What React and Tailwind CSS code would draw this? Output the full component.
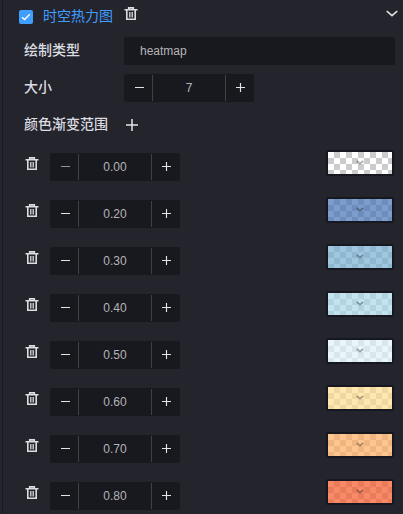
import { useState } from "react";

const initialStops = [
    { value: 0, light: "#ffffff", dark: "#cccccc" },
    { value: 0.2, light: "#7d9dcd", dark: "#6d8dbd" },
    { value: 0.3, light: "#9fc7df", dark: "#8fb7cf" },
    { value: 0.4, light: "#c3e4ef", dark: "#b3d4df" },
    { value: 0.5, light: "#e8f5fb", dark: "#d9e6eb" },
    { value: 0.6, light: "#ffe8b0", dark: "#efd8a0" },
    { value: 0.7, light: "#ffc58e", dark: "#efb580" },
    { value: 0.8, light: "#f88a67", dark: "#e97c5b" },
];

const TrashIcon = () => (
    <svg width="14" height="14" viewBox="0 0 14 14" fill="none" stroke="#dcdde0" strokeWidth="1.6">
        <path d="M0.5 2.7h13M4.7 2.5V0.9h4.6v1.6M2.8 3v9.3h8.4V3" />
        <path d="M5.8 5v5.5M8.2 5v5.5" strokeWidth="1.3" />
    </svg>
);

const PlusIcon = ({ size }) => (
    <svg width={size} height={size} viewBox="0 0 12 12" stroke="#e5e5e5" strokeWidth="1.5">
        <path d="M0 6h12M6 0v12" />
    </svg>
);

const Stepper = ({ value, step = 1, digits = 0, onChange }) => (
    <div className="flex h-7 w-[130px] items-stretch rounded-[2px] bg-[#18181f] py-px">
        <button
            type="button"
            onClick={() => onChange(Math.max(0, value - step))}
            className="flex w-[29px] items-center justify-center border-r border-[#414141] pb-px pl-[3px]"
        >
            <svg width="9" height="9" viewBox="0 0 9 9" stroke={value > 0 ? "#e5e5e5" : "#929296"} strokeWidth="1">
                <path d="M0 4.5h9" />
            </svg>
        </button>
        <span className="flex flex-1 items-center justify-center text-xs text-[#b5b5b8]">
            {value.toFixed(digits)}
        </span>
        <button
            type="button"
            onClick={() => onChange(value + step)}
            className="flex w-[29px] items-center justify-center border-l border-[#414141] pb-px pl-px"
        >
            <PlusIcon size={9} />
        </button>
    </div>
);

const Swatch = ({ light, dark }) => (
    <div className="h-[26px] w-[68px] rounded-[2px] border-2 border-[#17181f]">
        <div
            className="flex h-full items-center justify-center bg-[length:12px_12px]"
            style={{
                backgroundImage: `conic-gradient(${dark} 25%, ${light} 0 50%, ${dark} 0 75%, ${light} 0)`,
            }}
        >
            <svg width="8" height="5" viewBox="0 0 8 5" fill="none" stroke="#000" strokeOpacity="0.32" strokeWidth="1.8" className="mb-px">
                <path d="M0.8 1L4 3.6l3.2-2.6" />
            </svg>
        </div>
    </div>
);

const App = () => {
    const [enabled, setEnabled] = useState(true);
    const [size, setSize] = useState(7);
    const [stops, setStops] = useState(initialStops);

    const updateStop = (index, value) => {
        setStops(stops.map((stop, i) => (i === index ? { ...stop, value } : stop)));
    };

    const removeStop = (index) => {
        setStops(stops.filter((_, i) => i !== index));
    };

    return (
        <div className="h-[514px] overflow-hidden bg-[#24242d] pl-[2px] font-['Liberation_Sans','Noto_Sans_CJK_SC',sans-serif]">
            <div className="h-full border-l border-[#191921]">
                <div className="flex h-[37px] items-start pl-4 pr-[5px]">
                    <button
                        type="button"
                        onClick={() => setEnabled(!enabled)}
                        className="mt-[10px] flex h-[14px] w-[14px] items-center justify-center rounded-[2px] bg-[#409eff]"
                    >
                        {enabled && (
                            <svg width="10" height="8" viewBox="0 0 10 8" fill="none" stroke="#fff" strokeWidth="1.3">
                                <path d="M1 4.2L3.6 6.5 8.8 1.3" />
                            </svg>
                        )}
                    </button>
                    <span className="ml-[10px] mt-[6px] text-sm leading-5 text-[#409eff]">时空热力图</span>
                    <button type="button" className="ml-[11px] mt-[7px]">
                        <TrashIcon />
                    </button>
                    <svg width="12" height="7" viewBox="0 0 12 7" fill="none" stroke="#e5e5e5" strokeWidth="1.6" className="ml-auto mt-[10px]">
                        <path d="M0.7 1L6 5.7l5.3-4.7" />
                    </svg>
                </div>

                <div className="flex h-7 items-center pl-[21px] pr-2">
                    <span className="w-[100px] pb-[2px] text-sm font-medium text-[#dcdde0]">绘制类型</span>
                    <div className="flex h-7 flex-1 items-center rounded-[2px] bg-[#18181f] pl-4 text-xs text-[#b5b5b8]">
                        heatmap
                    </div>
                </div>

                <div className="mt-[9px] flex h-7 items-center pl-[21px]">
                    <span className="w-[100px] pb-[2px] text-sm font-medium text-[#dcdde0]">大小</span>
                    <Stepper value={size} onChange={setSize} />
                </div>

                <div className="mt-[9px] flex h-7 items-center pl-[21px]">
                    <span className="w-[102px] pb-[2px] text-sm font-medium text-[#dcdde0]">颜色渐变范围</span>
                    <PlusIcon size={12} />
                </div>

                <div className="mt-[11px] flex flex-col gap-[16px]">
                    {stops.map((stop, index) => (
                        <div key={index} className="flex h-[31px] items-start pl-[22px] pr-[9px]">
                            <button type="button" onClick={() => removeStop(index)} className="mr-[11px] mt-[7px]">
                                <TrashIcon />
                            </button>
                            <div className="mt-[3px]">
                                <Stepper
                                    value={stop.value}
                                    step={0.1}
                                    digits={2}
                                    onChange={(value) => updateStop(index, value)}
                                />
                            </div>
                            <div className="ml-auto">
                                <Swatch light={stop.light} dark={stop.dark} />
                            </div>
                        </div>
                    ))}
                </div>
            </div>
        </div>
    );
};

export default App;
